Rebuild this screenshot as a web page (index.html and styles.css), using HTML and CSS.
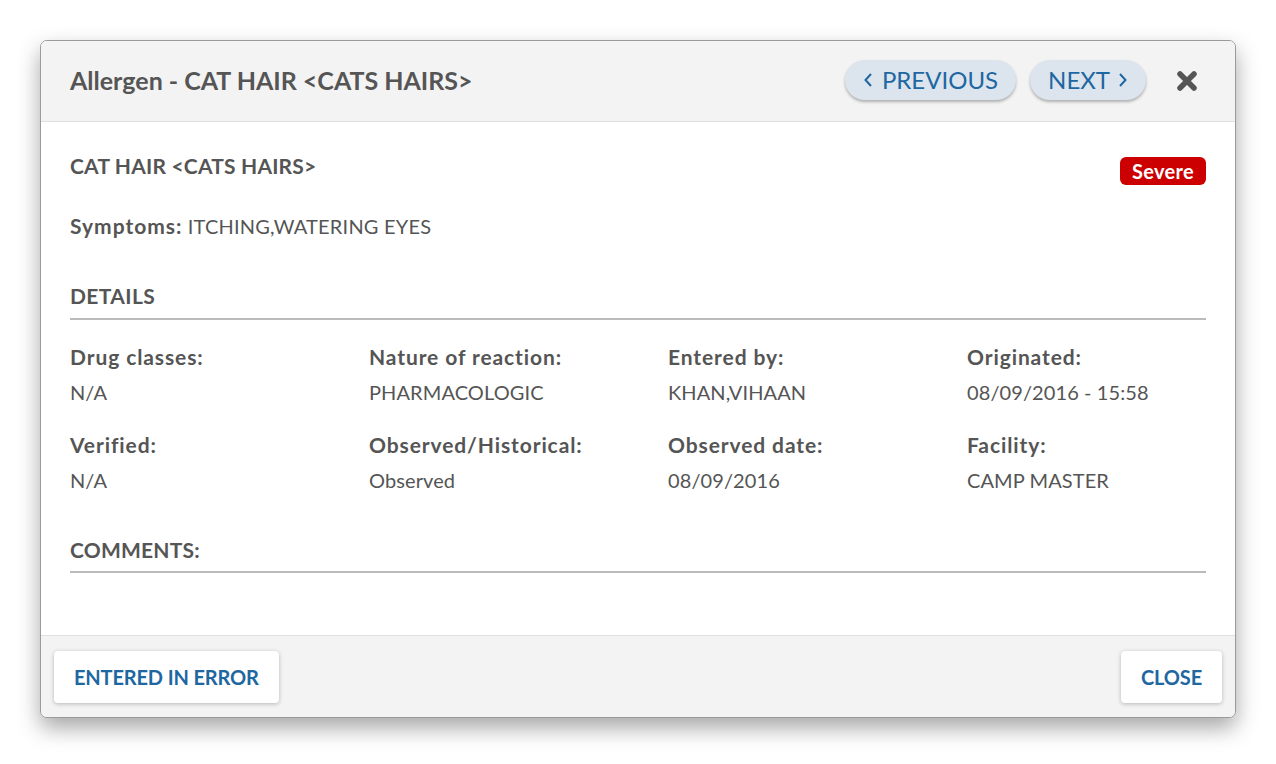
FILE: index.html
```html
<!DOCTYPE html>
<html lang="en">
<head>
<meta charset="utf-8">
<title>Allergen</title>
<link rel="stylesheet" href="styles.css">
</head>
<body>
<div class="page">
  <div class="modal">
    <div class="modal-header">
      <h1 class="modal-title">Allergen - CAT HAIR &lt;CATS HAIRS&gt;</h1>
      <div class="nav">
        <button class="pill"><svg class="chev" width="10" height="16" viewBox="0 0 10 16"><path d="M8 2 L2.5 8 L8 14" fill="none" stroke="#1e67a1" stroke-width="2"/></svg>PREVIOUS</button>
        <button class="pill">NEXT<svg class="chev right" width="10" height="16" viewBox="0 0 10 16"><path d="M2 2 L7.5 8 L2 14" fill="none" stroke="#1e67a1" stroke-width="2"/></svg></button>
        <button class="close-x" aria-label="Close">
          <svg width="22" height="22" viewBox="0 0 22 22"><path d="M4 4 L18 18 M18 4 L4 18" stroke="#555" stroke-width="5.5" stroke-linecap="round"/></svg>
        </button>
      </div>
    </div>
    <div class="modal-body">
      <div class="title-row">
        <div class="allergen-name">CAT HAIR &lt;CATS HAIRS&gt;</div>
        <span class="badge">Severe</span>
      </div>
      <div class="symptoms"><b>Symptoms:</b> ITCHING,WATERING EYES</div>
      <div class="section-head">DETAILS</div>
      <div class="grid">
        <div class="cell"><div class="label">Drug classes:</div><div class="value">N/A</div></div>
        <div class="cell"><div class="label">Nature of reaction:</div><div class="value">PHARMACOLOGIC</div></div>
        <div class="cell"><div class="label">Entered by:</div><div class="value">KHAN,VIHAAN</div></div>
        <div class="cell"><div class="label">Originated:</div><div class="value">08/09/2016 - 15:58</div></div>
        <div class="cell"><div class="label">Verified:</div><div class="value">N/A</div></div>
        <div class="cell"><div class="label">Observed/Historical:</div><div class="value">Observed</div></div>
        <div class="cell"><div class="label">Observed date:</div><div class="value">08/09/2016</div></div>
        <div class="cell"><div class="label">Facility:</div><div class="value">CAMP MASTER</div></div>
      </div>
      <div class="section-head comments">COMMENTS:</div>
    </div>
    <div class="modal-footer">
      <button class="btn">ENTERED IN ERROR</button>
      <button class="btn">CLOSE</button>
    </div>
  </div>
</div>
</body>
</html>
```

FILE: styles.css
```css
* { box-sizing: border-box; }
html, body { margin: 0; padding: 0; background: #fff; }
body { font-family: Lato, "Liberation Sans", sans-serif; color: #555; }
.page { padding: 40px; }
.modal {
  width: 1196px;
  height: 678px;
  border: 1px solid #9a9a9a;
  border-radius: 7px;
  background: #fff;
  box-shadow: 0 10px 22px rgba(0,0,0,0.35);
  overflow: hidden;
  display: flex;
  flex-direction: column;
}
.modal-header {
  height: 81px;
  flex: none;
  background: #f3f3f3;
  border-bottom: 1px solid #e0e0e0;
  display: flex;
  align-items: center;
  justify-content: space-between;
  padding: 0 37px 3px 29px;
}
.modal-title { margin: 0; font-size: 25px; font-weight: 700; color: #555; }
.nav { display: flex; align-items: center; gap: 14px; }
.pill {
  height: 40px;
  padding: 0 18px;
  border: none;
  border-radius: 20px;
  background: #dce4ee;
  box-shadow: 0 2px 3px rgba(0,0,0,0.28);
  color: #1e67a1;
  font-family: inherit;
  font-size: 24px;
  display: flex;
  align-items: center;
}
.chev { margin-right: 9px; }
.chev.right { margin: 0 0 0 8px; }
.close-x { border: none; background: none; padding: 0; margin: 3px 0 0 16px; display: flex; }
.modal-body { flex: 1; padding: 30px 29px 0 29px; }
.title-row { display: flex; justify-content: space-between; align-items: flex-start; }
.allergen-name { font-size: 21px; font-weight: 700; line-height: 28px; letter-spacing: 0.2px; }
.badge {
  margin-top: 5px;
  height: 28px;
  line-height: 28px;
  padding: 0 12px;
  border-radius: 6px;
  background: #cc0000;
  color: #fff;
  font-weight: 700;
  font-size: 20px;
  letter-spacing: 0.3px;
}
.symptoms { margin-top: 27px; font-size: 20px; line-height: 28px; letter-spacing: 0.2px; }
.symptoms b { font-weight: 700; font-size: 21px; letter-spacing: 1px; }
.section-head {
  margin-top: 42px;
  font-size: 21px;
  font-weight: 700;
  line-height: 28px;
  letter-spacing: 0.4px;
  padding-bottom: 8px;
  border-bottom: 2px solid #bbb;
}
.grid {
  display: grid;
  grid-template-columns: repeat(4, 299px);
  row-gap: 25px;
  margin: 23px 0 0 -30px;
}
.cell { padding-left: 30px; }
.label { font-size: 21px; font-weight: 700; line-height: 28px; letter-spacing: 0.9px; }
.value { font-size: 20px; line-height: 28px; margin-top: 7px; letter-spacing: 0.1px; }
.section-head.comments { margin-top: 42px; padding-bottom: 7px; letter-spacing: 0.2px; }
.modal-footer {
  height: 82px;
  flex: none;
  background: #f3f3f3;
  border-top: 1px solid #e0e0e0;
  display: flex;
  align-items: center;
  justify-content: space-between;
  padding: 0 13px;
}
.btn {
  height: 52px;
  padding: 0 20px;
  border: none;
  border-radius: 4px;
  background: #fff;
  box-shadow: 0 1px 4px rgba(0,0,0,0.25);
  color: #1e67a1;
  font-family: inherit;
  font-weight: 700;
  font-size: 20px;
  letter-spacing: -0.15px;
}
```
